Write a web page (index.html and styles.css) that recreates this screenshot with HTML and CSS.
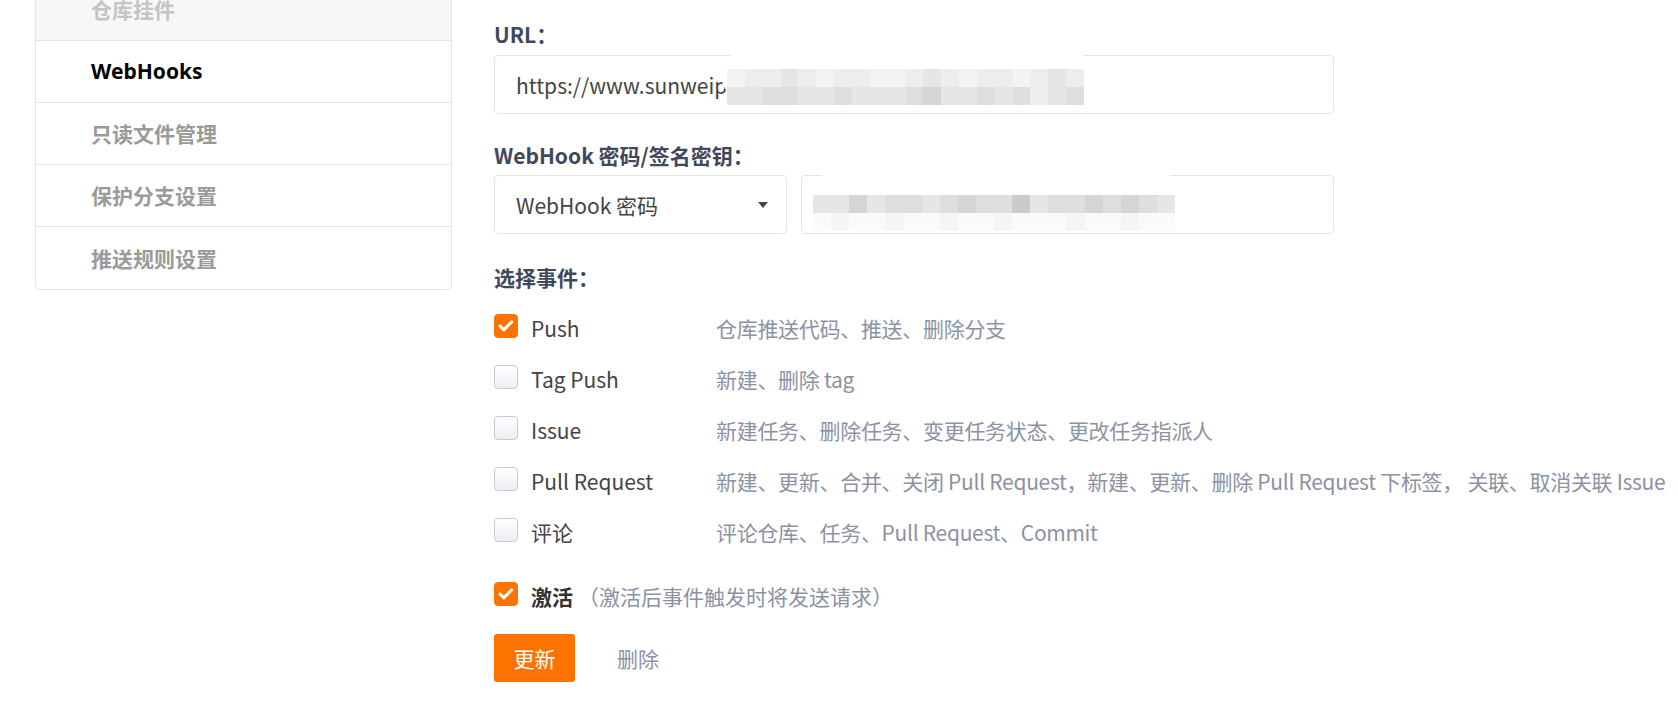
FILE: index.html
```html
<!DOCTYPE html>
<html lang="zh-CN">
<head>
    <meta charset="UTF-8">
    <meta name="viewport" content="width=device-width, initial-scale=1.0">
    <title>WebHooks</title>
    <link rel="stylesheet" href="styles.css">
</head>
<body>
    <div class="page">
        <aside class="side-menu">
            <a class="menu-item disabled">仓库挂件</a>
            <a class="menu-item active">WebHooks</a>
            <a class="menu-item">只读文件管理</a>
            <a class="menu-item">保护分支设置</a>
            <a class="menu-item">推送规则设置</a>
        </aside>

        <main class="hook-form">
            <div class="field">
                <label class="field-label">URL：</label>
                <div class="input url-input">
                    <span>https://www.sunweiper</span>
                    <!-- redacted part of the address -->
                    <div class="blob blob-url"></div>
                    <div class="mosaic mosaic-url">
                        <i class="s1"></i><i class="s2"></i><i class="s2"></i><i class="s3"></i><i class="s2"></i><i class="s1"></i><i class="s2"></i><i class="s2"></i><i class="s1"></i><i class="s1"></i><i class="s2"></i><i class="s3"></i><i class="s2"></i><i class="s1"></i><i class="s2"></i><i class="s2"></i><i class="s1"></i><i class="s2"></i><i class="s3"></i><i class="s2"></i>
                        <i class="s3"></i><i class="s3"></i><i class="s4"></i><i class="s4"></i><i class="s3"></i><i class="s3"></i><i class="s4"></i><i class="s3"></i><i class="s3"></i><i class="s3"></i><i class="s4"></i><i class="s5"></i><i class="s3"></i><i class="s3"></i><i class="s4"></i><i class="s3"></i><i class="s4"></i><i class="s2"></i><i class="s3"></i><i class="s4"></i>
                    </div>
                </div>
            </div>

            <div class="field">
                <label class="field-label">WebHook 密码/签名密钥：</label>
                <div class="secret-row">
                    <div class="input select">
                        <span>WebHook 密码</span>
                        <span class="caret"></span>
                    </div>
                    <div class="input secret">
                        <div class="blob blob-secret"></div>
                        <div class="mosaic mosaic-secret">
                            <i class="s3"></i><i class="s3"></i><i class="s5"></i><i class="s3"></i><i class="s4"></i><i class="s4"></i><i class="s3"></i><i class="s4"></i><i class="s5"></i><i class="s4"></i><i class="s4"></i><i class="s6"></i><i class="s3"></i><i class="s4"></i><i class="s4"></i><i class="s5"></i><i class="s4"></i><i class="s5"></i><i class="s4"></i><i class="s3"></i>
                            <i class="f1"></i><i class="f2"></i><i class="f1"></i><i class="f1"></i><i class="f2"></i><i class="f1"></i><i class="f1"></i><i class="f2"></i><i class="f1"></i><i class="f1"></i><i class="f2"></i><i class="f1"></i><i class="f1"></i><i class="f1"></i><i class="f2"></i><i class="f1"></i><i class="f1"></i><i class="f2"></i><i class="f1"></i><i class="f1"></i>
                        </div>
                    </div>
                </div>
            </div>

            <div class="field events">
                <label class="field-label">选择事件：</label>
                <div class="event-list">
                    <div class="event-row">
                        <span class="check checked">
                            <svg viewBox="0 0 24 24" width="22" height="22"><polyline points="5.5,12 9.6,16.2 18.2,7.6" fill="none" stroke="#fff" stroke-width="3.4" stroke-linecap="round" stroke-linejoin="round"/></svg>
                        </span>
                        <span class="event-name">Push</span>
                        <span class="event-desc">仓库推送代码、推送、删除分支</span>
                    </div>
                    <div class="event-row">
                        <span class="check"></span>
                        <span class="event-name">Tag Push</span>
                        <span class="event-desc">新建、删除 tag</span>
                    </div>
                    <div class="event-row">
                        <span class="check"></span>
                        <span class="event-name">Issue</span>
                        <span class="event-desc">新建任务、删除任务、变更任务状态、更改任务指派人</span>
                    </div>
                    <div class="event-row">
                        <span class="check"></span>
                        <span class="event-name">Pull Request</span>
                        <span class="event-desc">新建、更新、合并、关闭 Pull Request，新建、更新、删除 Pull Request 下标签， 关联、取消关联 Issue</span>
                    </div>
                    <div class="event-row">
                        <span class="check"></span>
                        <span class="event-name">评论</span>
                        <span class="event-desc">评论仓库、任务、Pull Request、Commit</span>
                    </div>
                </div>
            </div>

            <div class="event-row active-row">
                <span class="check checked">
                    <svg viewBox="0 0 24 24" width="22" height="22"><polyline points="5.5,12 9.6,16.2 18.2,7.6" fill="none" stroke="#fff" stroke-width="3.4" stroke-linecap="round" stroke-linejoin="round"/></svg>
                </span>
                <span class="active-name">激活</span>
                <span class="hint">（激活后事件触发时将发送请求）</span>
            </div>

            <div class="actions">
                <button class="btn btn-primary">更新</button>
                <button class="btn-link">删除</button>
            </div>
        </main>
    </div>
</body>
</html>
```

FILE: styles.css
```css
body {
    margin: 0;
    font-family: "Noto Sans CJK SC", "Noto Sans", sans-serif;
    background: #fff;
    color: #444;
}

.page {
    display: flex;
    align-items: flex-start;
    padding-left: 35px;
}

/* side menu */
.side-menu {
    flex: none;
    width: 417px;
    box-sizing: border-box;
    margin-top: -22px;
    display: flex;
    flex-direction: column;
    border: 1px solid #e3e4e8;
    border-radius: 0 0 5px 5px;
}

.menu-item {
    height: 62px;
    box-sizing: border-box;
    padding-left: 55px;
    line-height: 61px;
    border-bottom: 1px solid #e3e4e8;
    font-size: 21px;
    font-weight: 700;
    color: #9a9a9a;
}

.menu-item:last-child {
    border-bottom: none;
    line-height: 62px;
}

.menu-item.disabled {
    background: #f7f7f7;
    color: #c4c4c4;
}

.menu-item.active {
    color: #000;
    font-family: "Noto Sans", "Noto Sans CJK SC", sans-serif;
}

/* form */
.hook-form {
    flex: 1;
    min-width: 0;
    margin-left: 42px;
    padding-top: 19px;
}

.field + .field {
    margin-top: 26px;
}

.field.events {
    margin-top: 28px;
}

.field-label {
    display: block;
    font-size: 21px;
    line-height: 30px;
    font-weight: 700;
    color: #40485b;
}

.input {
    position: relative;
    height: 59px;
    box-sizing: border-box;
    margin-top: 6px;
    padding-left: 21px;
    display: flex;
    align-items: center;
    border: 1px solid #e3e4ea;
    border-radius: 4px;
    font-size: 21px;
    color: #444;
}

.url-input {
    width: 840px;
}

.secret-row {
    width: 840px;
    margin-top: 5px;
    display: flex;
    gap: 14px;
}

.secret-row .input {
    margin-top: 0;
}

.select {
    width: 293px;
    justify-content: space-between;
    padding-right: 18px;
}

.caret {
    width: 0;
    height: 0;
    border-left: 5.5px solid transparent;
    border-right: 5.5px solid transparent;
    border-top: 6px solid #444;
}

.secret {
    flex: 1;
}

/* redaction blur */
.blob {
    position: absolute;
    background: #fff;
    border-radius: 40px;
}

.blob-url {
    left: 226px;
    top: -6px;
    width: 372px;
    height: 50px;
}

.blob-secret {
    left: 4px;
    top: -4px;
    width: 380px;
    height: 60px;
}

.mosaic {
    position: absolute;
    display: grid;
    grid-template-columns: repeat(20, 1fr);
    grid-template-rows: 18px 18px;
}

.mosaic-url {
    left: 232px;
    top: 13px;
    width: 357px;
}

.mosaic-secret {
    left: 11px;
    top: 19px;
    width: 362px;
}

.s1 { background: #f3f3f3; }
.s2 { background: #ededed; }
.s3 { background: #e6e6e6; }
.s4 { background: #dedede; }
.s5 { background: #d5d5d5; }
.s6 { background: #cbcbcb; }
.f1 { background: #fafafa; }
.f2 { background: #f5f5f5; }

/* events */
.event-list {
    margin-top: 8px;
}

.event-row {
    height: 51px;
    display: flex;
    align-items: center;
    font-size: 21px;
}

.check {
    width: 24px;
    height: 24px;
    box-sizing: border-box;
    flex: none;
    margin-right: 13px;
    display: flex;
    align-items: center;
    justify-content: center;
    border: 1px solid #c9cbd2;
    border-radius: 4px;
    background: linear-gradient(#ffffff, #eceef2);
}

.check.checked {
    background: #fe7300;
    border-color: #fe7300;
}

.event-name {
    width: 185px;
    flex: none;
    padding-top: 4px;
    color: #444;
}

.event-desc {
    padding-top: 4px;
    white-space: nowrap;
    letter-spacing: -0.3px;
    color: #8c92a4;
}

.active-row {
    height: 50px;
    margin-top: 14px;
}

.active-name {
    padding-top: 3px;
    font-weight: 700;
    color: #333;
}

.hint {
    margin-left: 5px;
    padding-top: 3px;
    color: #8c92a4;
}

/* buttons */
.actions {
    margin-top: 15px;
    display: flex;
    align-items: center;
}

.btn {
    height: 48px;
    width: 81px;
    padding: 0;
    border: none;
    border-radius: 3px;
    font-family: inherit;
    font-size: 21px;
    cursor: pointer;
}

.btn-primary {
    background: #fe7300;
    color: #fff;
}

.btn-link {
    margin-left: 42px;
    padding: 0;
    border: none;
    background: none;
    font-family: inherit;
    font-size: 21px;
    color: #8c92a4;
    cursor: pointer;
}
```
